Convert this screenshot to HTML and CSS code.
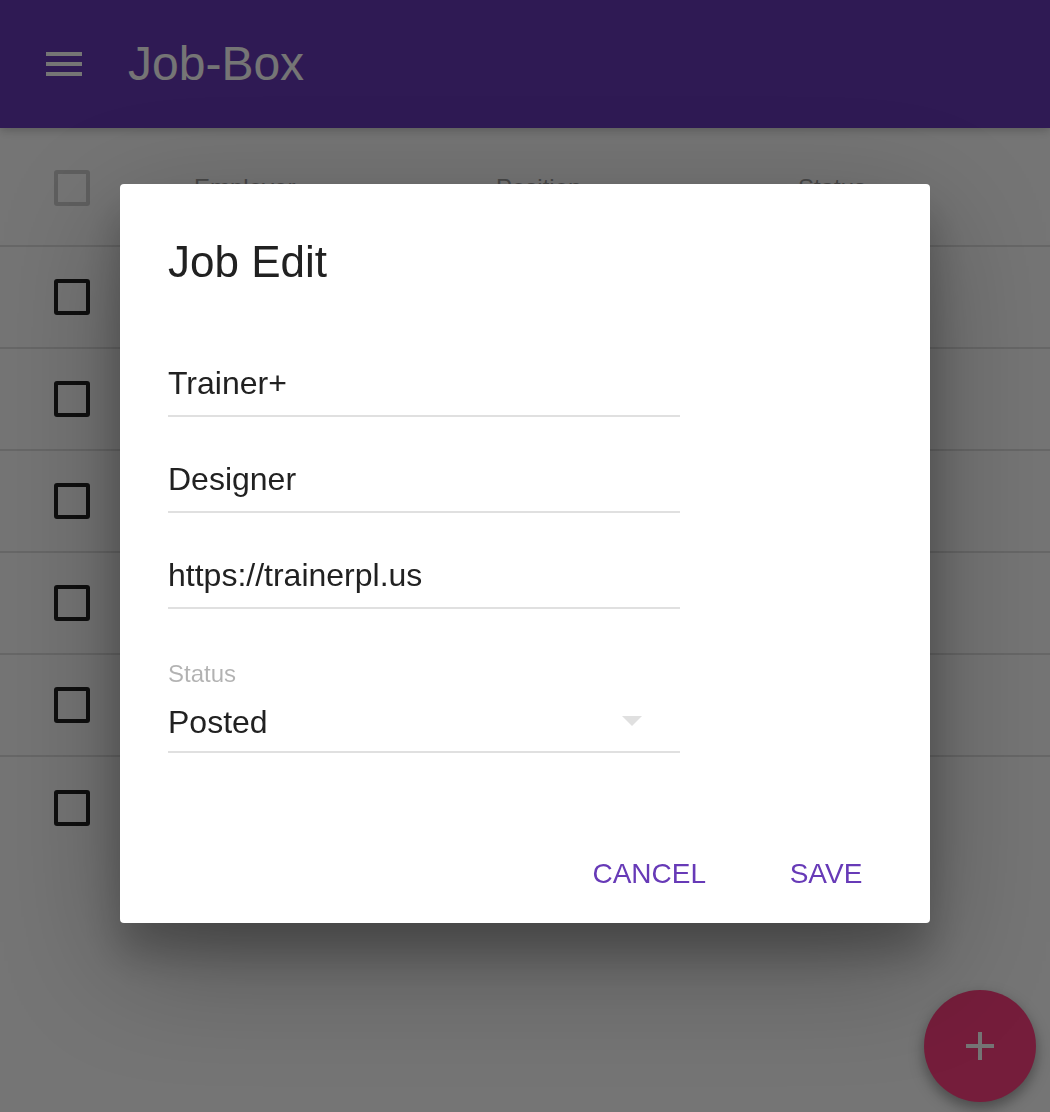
FILE: index.html
```html
<!DOCTYPE html>
<html lang="en">
<head>
<meta charset="utf-8">
<title>Job-Box</title>
<link rel="stylesheet" href="styles.css">
</head>
<body>
<header class="appbar">
  <svg class="menu-icon" width="36" height="24" viewBox="0 0 36 24" aria-hidden="true">
    <rect x="0" y="0" width="36" height="4" fill="#fff"/>
    <rect x="0" y="10" width="36" height="4" fill="#fff"/>
    <rect x="0" y="20" width="36" height="4" fill="#fff"/>
  </svg>
  <h1 class="app-title">Job-Box</h1>
</header>

<main class="table">
  <div class="row head">
    <div class="cell-check"><span class="checkbox checkbox-head"></span></div>
    <div class="col-head">Employer</div>
    <div class="col-head">Position</div>
    <div class="col-head">Status</div>
  </div>
  <div class="row"><div class="cell-check"><span class="checkbox"></span></div><div></div><div></div><div></div></div>
  <div class="row"><div class="cell-check"><span class="checkbox"></span></div><div></div><div></div><div></div></div>
  <div class="row"><div class="cell-check"><span class="checkbox"></span></div><div></div><div></div><div></div></div>
  <div class="row"><div class="cell-check"><span class="checkbox"></span></div><div></div><div></div><div></div></div>
  <div class="row"><div class="cell-check"><span class="checkbox"></span></div><div></div><div></div><div></div></div>
  <div class="row last"><div class="cell-check"><span class="checkbox"></span></div><div></div><div></div><div></div></div>
</main>

<button class="fab" aria-label="Add">
  <svg width="28" height="28" viewBox="0 0 28 28" aria-hidden="true">
    <rect x="12" y="0" width="4" height="28" fill="#fff"/>
    <rect x="0" y="12" width="28" height="4" fill="#fff"/>
  </svg>
</button>

<div class="scrim"></div>

<section class="dialog" role="dialog" aria-labelledby="dlg-title">
  <h2 class="dialog-title" id="dlg-title">Job Edit</h2>
  <div class="dialog-body">
    <div class="field">
      <input class="field-input" type="text" value="Trainer+">
      <div class="underline"></div>
    </div>
    <div class="field">
      <input class="field-input" type="text" value="Designer">
      <div class="underline"></div>
    </div>
    <div class="field">
      <input class="field-input" type="text" value="https://trainerpl.us">
      <div class="underline"></div>
    </div>
    <div class="field select-field">
      <div class="select-label">Status</div>
      <div class="select-value">
        <span>Posted</span>
        <span class="arrow"></span>
      </div>
      <div class="underline"></div>
    </div>
  </div>
  <div class="dialog-actions">
    <button class="flat-btn">Cancel</button>
    <button class="flat-btn">Save</button>
  </div>
</section>
</body>
</html>
```

FILE: styles.css
```css
* { box-sizing: border-box; }

html, body {
  margin: 0;
  padding: 0;
  height: 100%;
}

body {
  font-family: "Liberation Sans", Arial, sans-serif;
  background: #ffffff;
  color: #212121;
  overflow: hidden;
}

.appbar {
  height: 128px;
  background: #673ab7;
  display: flex;
  align-items: center;
  padding-left: 46px;
  box-shadow: 0 2px 12px rgba(0,0,0,0.12), 0 2px 8px rgba(0,0,0,0.12);
  position: relative;
}

.menu-icon {
  display: block;
  margin-right: 46px;
}

.app-title {
  margin: 0;
  font-size: 48px;
  line-height: 64px;
  font-weight: normal;
  color: #ffffff;
}

.table {
  display: flex;
  flex-direction: column;
}

.row {
  display: grid;
  grid-template-columns: 140px 302px 302px 1fr;
  align-items: center;
  padding-left: 54px;
  height: 102px;
  border-bottom: 2px solid #e0e0e0;
}

.row.head {
  height: 119px;
}

.row.last {
  border-bottom: none;
}

.row.head .cell-check {
  padding-top: 2px;
}

.cell-check {
  display: flex;
  align-items: center;
}

.checkbox {
  display: block;
  width: 36px;
  height: 36px;
  border: 4px solid #212121;
  border-radius: 3px;
}

.checkbox-head {
  border-color: #cfcfcf;
}

.col-head {
  font-size: 24px;
  color: #9e9e9e;
  padding-top: 2px;
}

.fab {
  position: fixed;
  right: 14px;
  bottom: 10px;
  width: 112px;
  height: 112px;
  border-radius: 50%;
  border: none;
  padding: 0;
  background: #ff4081;
  display: flex;
  align-items: center;
  justify-content: center;
  box-shadow: 0 6px 20px rgba(0,0,0,0.19), 0 6px 12px rgba(0,0,0,0.23);
}

.fab svg { display: block; }

.scrim {
  position: fixed;
  inset: 0;
  background: rgba(0,0,0,0.54);
  z-index: 10;
}

.dialog {
  position: absolute;
  left: 120px;
  top: 184px;
  width: 810px;
  background: #ffffff;
  border-radius: 4px;
  z-index: 20;
  box-shadow: 0 38px 120px rgba(0,0,0,0.30), 0 30px 40px rgba(0,0,0,0.22);
}

.dialog-title {
  margin: 0;
  padding: 46px 48px 42px;
  font-size: 44px;
  line-height: 64px;
  font-weight: normal;
  color: #212121;
}

.dialog-body {
  padding: 0 48px 54px;
}

.field {
  width: 512px;
  height: 96px;
  padding-top: 23px;
}

.field-input {
  display: block;
  width: 100%;
  height: 48px;
  border: none;
  outline: none;
  padding: 0;
  margin: 0;
  background: transparent;
  font-family: "Liberation Sans", Arial, sans-serif;
  font-size: 32px;
  line-height: 48px;
  color: #212121;
}

.underline {
  height: 2px;
  background: #e0e0e0;
  margin-top: 8px;
}

.select-field {
  height: 144px;
  padding-top: 35px;
}

.select-label {
  font-size: 24px;
  line-height: 30px;
  color: rgba(0,0,0,0.3);
}

.select-value {
  margin-top: 9px;
  height: 48px;
  display: flex;
  align-items: center;
  justify-content: space-between;
  font-size: 32px;
  line-height: 48px;
  color: #212121;
}

.select-field .underline {
  margin-top: 5px;
}

.arrow {
  width: 0;
  height: 0;
  border-left: 10px solid transparent;
  border-right: 10px solid transparent;
  border-top: 10px solid #e0e0e0;
  margin-right: 38px;
  margin-bottom: 3px;
}

.dialog-actions {
  display: flex;
  justify-content: flex-end;
  padding: 16px 16px 13px;
}

.flat-btn {
  min-width: 176px;
  height: 72px;
  padding: 0 32px;
  border: none;
  background: transparent;
  font-family: "Liberation Sans", Arial, sans-serif;
  font-size: 28px;
  line-height: 72px;
  text-transform: uppercase;
  color: #673ab7;
  border-radius: 4px;
}
```
